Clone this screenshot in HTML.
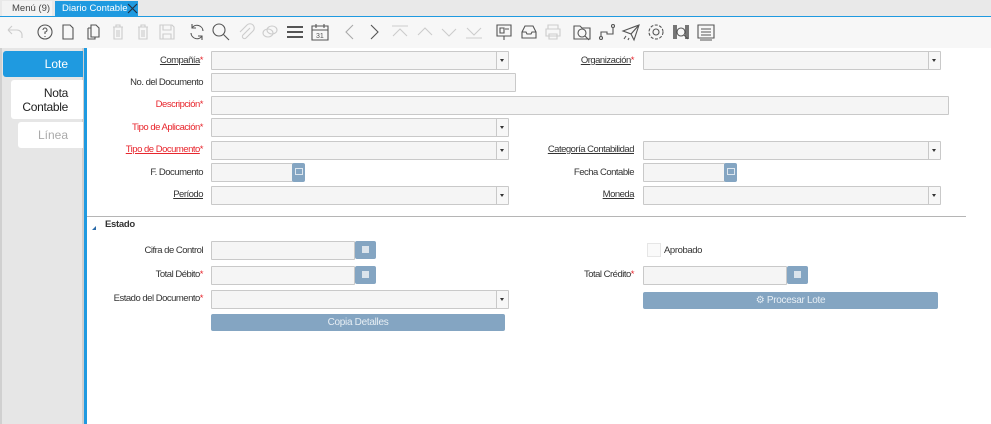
<!DOCTYPE html>
<html><head><meta charset="utf-8"><style>
*{box-sizing:border-box;margin:0;padding:0}
body{width:991px;height:424px;overflow:hidden;background:#fff;font-family:"Liberation Sans",sans-serif;font-size:9.5px;color:#333;position:relative}
.a{position:absolute}
.lbl{position:absolute;text-align:right;white-space:nowrap;line-height:12px;letter-spacing:-0.5px}
.red{color:#e8262d}
.u{text-decoration:underline}
.st{color:#e8262d}
.in{position:absolute;height:19px;background:#f5f5f5;border:1px solid #c9c9c9;border-radius:1px}
.dd{position:absolute;width:12px;height:17px;right:0;top:0;border-left:1px solid #c9c9c9;background:#f7f7f7}
.dd:after{content:"";position:absolute;left:3px;top:7px;border-left:2.5px solid transparent;border-right:2.5px solid transparent;border-top:3px solid #333}
.btn{position:absolute;background:#84a5c2;border-radius:2px}
.bt{position:absolute;background:#84a5c2;border-radius:2px;color:#e7eef4;text-align:center;line-height:17px;font-size:10px;letter-spacing:-0.3px}
svg.i{position:absolute;top:22px;width:20px;height:20px;fill:none;stroke:#555;stroke-width:1.1}
svg.g{stroke:#ccc}
</style></head><body>
<div class="a" style="left:0;top:0;width:991px;height:16px;background:#e9e9e9"></div>
<div class="a" style="left:0;top:16px;width:991px;height:1px;background:#1f9ae0"></div>
<div class="a" style="left:2px;top:1px;width:50px;height:15px;background:#f3f3f3;color:#444;line-height:15px;padding-left:10px;font-size:9.5px">Menú (9)</div>
<div class="a" style="left:55px;top:1px;width:83px;height:16px;background:#1f9ae0;color:#fff;line-height:15px;padding-left:7px;font-size:9.5px">Diario Contable</div>
<svg class="a" style="left:127px;top:3px" width="11" height="11"><path d="M1 1L10 10M10 1L1 10" stroke="#234" stroke-width="1.2"/></svg>
<div class="a" style="left:0;top:17px;width:991px;height:31px;background:#f7f7f7"></div>
<svg class="i g" style="left:5px" viewBox="0 0 20 20"><path d="M3 8h9a5 5 0 0 1 5 5v3M3 8l4-4M3 8l4 4"/></svg>
<svg class="i" style="left:35px" viewBox="0 0 20 20"><circle cx="10" cy="10" r="7"/><path d="M8 8a2 2 0 1 1 2 2v2M10 14v1"/></svg>
<svg class="i" style="left:58px" viewBox="0 0 20 20"><path d="M5 3h7l3 3v11H5z"/></svg>
<svg class="i" style="left:83px" viewBox="0 0 20 20"><path d="M8 3h5l3 3v9H8zM5 6h3M5 6v11h7v-2"/></svg>
<svg class="i g" style="left:108px" viewBox="0 0 20 20"><path d="M5 5h10M8 5V3h4v2M6 5v12h8V5M9 8v7M11 8v7"/></svg>
<svg class="i g" style="left:133px" viewBox="0 0 20 20"><path d="M5 5h10M8 5V3h4v2M6 5v12h8V5M9 8v7M11 8v7"/></svg>
<svg class="i g" style="left:157px" viewBox="0 0 20 20"><path d="M3 3h12l2 2v12H3zM6 3v5h8V3M6 17v-5h8v5"/></svg>
<svg class="i" style="left:187px" viewBox="0 0 20 20"><path d="M16 9a6 6 0 0 0-11-3M4 11a6 6 0 0 0 11 3M5 2v4h4M15 18v-4h-4"/></svg>
<svg class="i" style="left:211px" viewBox="0 0 20 20"><circle cx="8" cy="8" r="6"/><path d="M12.5 12.5L18 18"/></svg>
<svg class="i g" style="left:236px" viewBox="0 0 20 20"><path d="M14 6l-7 7a2 2 0 0 0 3 3l7-7a4 4 0 0 0-6-6L4 10"/></svg>
<svg class="i g" style="left:260px" viewBox="0 0 20 20"><ellipse cx="8" cy="11" rx="5" ry="4"/><ellipse cx="12" cy="8" rx="5" ry="4"/></svg>
<svg class="i" style="left:285px;stroke-width:2" viewBox="0 0 20 20"><path d="M2 5h16M2 10h16M2 15h16"/></svg>
<svg class="i" style="left:310px" viewBox="0 0 20 20"><path d="M2 4h16v14H2zM2 8h16M6 2v4M14 2v4"/><text x="6" y="16" font-size="7" fill="#555" stroke="none">31</text></svg>
<svg class="i g" style="left:340px;stroke:#aaa" viewBox="0 0 20 20"><path d="M13 3l-7 7 7 7"/></svg>
<svg class="i" style="left:364px" viewBox="0 0 20 20"><path d="M7 3l7 7-7 7"/></svg>
<svg class="i g" style="left:390px" viewBox="0 0 20 20"><path d="M2 4h16M3 14l7-7 7 7"/></svg>
<svg class="i g" style="left:415px" viewBox="0 0 20 20"><path d="M3 13l7-7 7 7"/></svg>
<svg class="i g" style="left:439px" viewBox="0 0 20 20"><path d="M3 7l7 7 7-7"/></svg>
<svg class="i g" style="left:464px" viewBox="0 0 20 20"><path d="M2 16h16M3 6l7 7 7-7"/></svg>
<svg class="i" style="left:494px" viewBox="0 0 20 20"><path d="M3 3h14v11H3zM10 14v4M6 6h4v5H6zM11 7h4"/></svg>
<svg class="i" style="left:519px" viewBox="0 0 20 20"><path d="M3 10l3-6h8l3 6v6H3zM3 10h4l1 2h4l1-2h4"/></svg>
<svg class="i g" style="left:543px" viewBox="0 0 20 20"><path d="M5 7V3h10v4M3 7h14v7H3zM6 12h8v5H6z"/></svg>
<svg class="i" style="left:572px" viewBox="0 0 20 20"><path d="M2 4h6l2 2h8v11H2z"/><circle cx="10" cy="11" r="4"/><path d="M13 14l4 4"/></svg>
<svg class="i" style="left:597px" viewBox="0 0 20 20"><circle cx="4" cy="16" r="1.5"/><circle cx="16" cy="4" r="1.5"/><path d="M4 14v-4h6v2h6V6"/></svg>
<svg class="i" style="left:621px" viewBox="0 0 20 20"><path d="M2 9l16-6-5 15-3-6zM10 12l8-9M5 14l-2 3M8 16l-1 2"/></svg>
<svg class="i" style="left:646px" viewBox="0 0 20 20"><circle cx="10" cy="10" r="3"/><circle cx="10" cy="10" r="7" stroke-dasharray="3 1.5"/></svg>
<svg class="i" style="left:671px" viewBox="0 0 20 20"><path d="M3 3v14M5 3v14M15 3v14M17 3v14" stroke-width="1.6"/><circle cx="10" cy="10" r="4"/><path d="M13 13l4 4"/></svg>
<svg class="i" style="left:696px" viewBox="0 0 20 20"><path d="M2 3h16v13H2zM5 7h10M5 10h10M5 13h10M4 18h12"/></svg>
<div class="a" style="left:0;top:48px;width:84px;height:376px;background:#e6e6e6;border-left:2px solid #d0d0d0;border-right:2px solid #cfcfcf"></div>
<div class="a" style="left:84px;top:48px;width:3px;height:376px;background:#1f9ae0"></div>
<div class="a" style="left:3px;top:51px;width:80px;height:26px;background:#1f9ae0;border-radius:3px 0 0 3px;color:#fff;font-size:12px;line-height:26px;text-align:right;padding-right:15px">Lote</div>
<div class="a" style="left:11px;top:80px;width:72px;height:39px;background:#fff;border-radius:3px 0 0 3px;color:#222;font-size:12px;line-height:14px;text-align:right;padding:6px 15px 0 0;letter-spacing:-0.3px">Nota<br>Contable</div>
<div class="a" style="left:18px;top:122px;width:65px;height:26px;background:#fff;border-radius:3px 0 0 3px;color:#aaa;font-size:12px;line-height:26px;text-align:right;padding-right:15px">Línea</div>
<div class="lbl" style="right:788px;top:55px"><span class="u">Compañía</span><span class="st">*</span></div>
<div class="in" style="left:211px;top:51px;width:298px"><div class="dd"></div></div>
<div class="lbl" style="right:357px;top:55px"><span class="u">Organización</span><span class="st">*</span></div>
<div class="in" style="left:643px;top:51px;width:298px"><div class="dd"></div></div>
<div class="lbl" style="right:788px;top:77px">No. del Documento</div>
<div class="in" style="left:211px;top:73px;width:305px"></div>
<div class="lbl red" style="right:788px;top:99px">Descripción*</div>
<div class="in" style="left:211px;top:96px;width:738px"></div>
<div class="lbl red" style="right:788px;top:122px">Tipo de Aplicación*</div>
<div class="in" style="left:211px;top:118px;width:298px"><div class="dd"></div></div>
<div class="lbl red" style="right:788px;top:144px"><span class="u">Tipo de Documento</span>*</div>
<div class="in" style="left:211px;top:141px;width:298px"><div class="dd"></div></div>
<div class="lbl" style="right:357px;top:144px"><span class="u">Categoría Contabilidad</span></div>
<div class="in" style="left:643px;top:141px;width:298px"><div class="dd"></div></div>
<div class="lbl" style="right:788px;top:167px">F. Documento</div>
<div class="in" style="left:211px;top:163px;width:82px"></div>
<div class="btn" style="left:292px;top:163px;width:13px;height:19px"><div class="a" style="left:3px;top:5px;width:8px;height:7px;border:1px solid #dde6ee"></div></div>
<div class="lbl" style="right:357px;top:167px">Fecha Contable</div>
<div class="in" style="left:643px;top:163px;width:82px"></div>
<div class="btn" style="left:724px;top:163px;width:13px;height:19px"><div class="a" style="left:3px;top:5px;width:8px;height:7px;border:1px solid #dde6ee"></div></div>
<div class="lbl" style="right:788px;top:189px"><span class="u">Período</span></div>
<div class="in" style="left:211px;top:186px;width:298px"><div class="dd"></div></div>
<div class="lbl" style="right:357px;top:189px"><span class="u">Moneda</span></div>
<div class="in" style="left:643px;top:186px;width:298px"><div class="dd"></div></div>
<div class="a" style="left:87px;top:216px;width:879px;height:1px;background:#b5b5b5"></div>
<div class="a" style="left:92px;top:226px;border-left:4px solid transparent;border-bottom:4px solid #2a6aa8"></div>
<div class="a" style="left:105px;top:219px;font-weight:bold;font-size:9.5px;color:#333;letter-spacing:-0.3px">Estado</div>
<div class="lbl" style="right:788px;top:245px">Cifra de Control</div>
<div class="in" style="left:211px;top:241px;width:144px"></div>
<div class="btn" style="left:355px;top:241px;width:21px;height:18px"><div class="a" style="left:7px;top:5px;width:7px;height:7px;background:#dbe4ec"></div></div>
<div class="a" style="left:647px;top:243px;width:14px;height:14px;border:1px solid #e6e6e6;background:#fafafa"></div>
<div class="a" style="left:664px;top:245px;letter-spacing:-0.4px">Aprobado</div>
<div class="lbl" style="right:788px;top:269px">Total Débito<span class="st">*</span></div>
<div class="in" style="left:211px;top:266px;width:144px"></div>
<div class="btn" style="left:355px;top:266px;width:21px;height:18px"><div class="a" style="left:7px;top:5px;width:7px;height:7px;background:#dbe4ec"></div></div>
<div class="lbl" style="right:357px;top:269px">Total Crédito<span class="st">*</span></div>
<div class="in" style="left:643px;top:266px;width:144px"></div>
<div class="btn" style="left:787px;top:266px;width:21px;height:18px"><div class="a" style="left:7px;top:5px;width:7px;height:7px;background:#dbe4ec"></div></div>
<div class="lbl" style="right:788px;top:293px">Estado del Documento<span class="st">*</span></div>
<div class="in" style="left:211px;top:290px;width:298px"><div class="dd"></div></div>
<div class="bt" style="left:643px;top:292px;width:295px;height:17px">&#9881; Procesar Lote</div>
<div class="bt" style="left:211px;top:314px;width:294px;height:17px">Copia Detalles</div>
</body></html>
